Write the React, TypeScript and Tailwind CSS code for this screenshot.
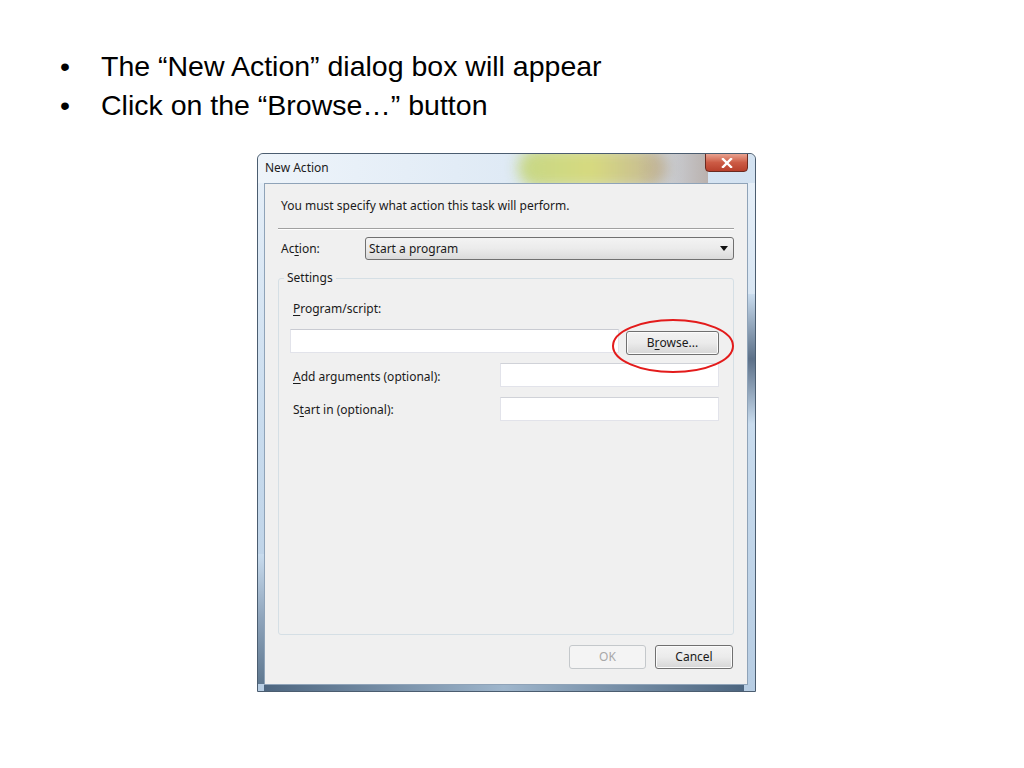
import React from "react";

const ui = { fontFamily: '"Noto Sans", "Open Sans", sans-serif' };

function U({ children }: { children: React.ReactNode }) {
  return <span className="underline underline-offset-2">{children}</span>;
}

function Btn({ children, w, disabled }: { children: React.ReactNode; w: string; disabled?: boolean }) {
  return (
    <div
      className={`${w} h-[24px] rounded-[3px] border flex items-center justify-center text-[12px] ${
        disabled
          ? "border-[#c4c8cb] bg-[#f4f4f4] text-[#a8a8a8]"
          : "border-[#707070] bg-gradient-to-b from-[#f3f3f3] via-[#ebebeb] to-[#d6d6d6] text-[#1a1a1a] shadow-[inset_0_0_0_1px_#fbfbfb]"
      }`}
    >
      {children}
    </div>
  );
}

export default function App() {
  return (
    <div className="w-[1024px] h-[768px] bg-white overflow-hidden" style={{ fontFamily: '"Liberation Sans", Arial, sans-serif' }}>
      <ul className="pt-[47px] pl-[60px] text-[28.5px] leading-[39px] text-black">
        <li className="flex">
          <span className="w-[41px]">•</span>
          <span>The “New Action” dialog box will appear</span>
        </li>
        <li className="flex">
          <span className="w-[41px]">•</span>
          <span>Click on the “Browse…” button</span>
        </li>
      </ul>

      {/* Window */}
      <div
        className="ml-[257px] mt-[28px] w-[499px] h-[539px] rounded-t-[6px] border border-[#4b5d70] bg-gradient-to-b from-[#e9f1f9] via-[#c9dcee] to-[#b7cde3] flex flex-col relative"
        style={ui}
      >
        {/* frame shading strips */}
        <div className="absolute left-0 top-[400px] w-[6px] h-[130px] bg-gradient-to-b from-[#c9dcee] via-[#8ea4bb] to-[#5f7890]" />
        <div className="absolute right-0 top-[140px] w-[7px] h-[130px] bg-gradient-to-b from-[#c9dcee] via-[#5d7189] to-[#c9dcee]" />
        <div className="absolute left-[6px] bottom-0 w-[480px] h-[6px] bg-gradient-to-r from-[#4d6680] via-[#9fb6cc] to-[#4d6680]" />

        {/* Title bar */}
        <div className="h-[29px] flex relative rounded-t-[6px] overflow-hidden bg-gradient-to-r from-[#eef4fa] via-[#dfeaf5] to-[#d3e2f1]">
          <div className="absolute left-[260px] top-[-6px] w-[150px] h-[40px] rounded-full bg-gradient-to-r from-[#c3d57a] via-[#d6d873] to-[#c0ad8c] blur-[7px] opacity-90" />
          <div className="absolute left-[380px] top-0 w-[70px] h-[29px] bg-gradient-to-r from-transparent to-[#b3a59d] opacity-80" />
          <span className="relative pl-[7px] pt-[5px] text-[12px] text-[#1c1c1c]">New Action</span>
          <div className="absolute right-[7px] top-[-1px] w-[43px] h-[19px] rounded-b-[4px] border border-[#6b2a20] bg-gradient-to-b from-[#e8a290] via-[#cc5b45] to-[#b8402c] flex items-center justify-center">
            <svg width="12" height="10" viewBox="0 0 12 10">
              <path d="M2 1 L10 9 M10 1 L2 9" stroke="#fff" strokeWidth="2.4" strokeLinecap="square" />
            </svg>
          </div>
        </div>

        {/* Client area */}
        <div className="relative flex-1 ml-[6px] mr-[7px] mb-[6px] border border-[#8fa3b8] bg-[#f0f0f0] flex flex-col text-[12px] text-[#1a1a1a]">
          <div className="pl-[16px] pt-[14px] leading-[16px]">You must specify what action this task will perform.</div>
          <div className="mx-[13px] mt-[14px] h-[2px] border-t border-[#a0a0a0] border-b border-b-white" />
          <div className="flex items-center mt-[7px] pl-[16px] pr-[13px]">
            <span className="w-[84px]">
              Ac<U>t</U>ion:
            </span>
            <div className="flex-1 h-[23px] rounded-[3px] border border-[#707070] bg-gradient-to-b from-[#f3f3f3] via-[#ebebeb] to-[#dadada] flex items-center pl-[3px] pr-[5px]">
              <span className="flex-1">Start a program</span>
              <svg width="8" height="5" viewBox="0 0 8 5">
                <path d="M0 0 H8 L4 5 Z" fill="#111" />
              </svg>
            </div>
          </div>

          {/* Group box */}
          <div className="relative mx-[13px] mt-[18px] h-[357px] rounded-[3px] border border-[#d5dfe5]">
            <span className="absolute left-[5px] top-[-10px] px-[3px] bg-[#f0f0f0] leading-[18px]">Settings</span>
            <div className="pt-[21px] pl-[14px] leading-[18px]">
              <U>P</U>rogram/script:
            </div>
            <div className="flex items-start mt-[11px] pl-[11px] pr-[14px]">
              <div className="w-[329px] h-[24px] bg-white border border-[#e2e3ea] border-t-[#c9cbd2]" />
              <div className="ml-[7px] mt-[2px] flex-1">
                <Btn w="w-full">
                  B<U>r</U>owse...
                </Btn>
              </div>
            </div>
            <div className="flex items-center mt-[8px] pl-[14px] pr-[14px]">
              <span className="flex-1 pt-[3px]">
                <U>A</U>dd arguments (optional):
              </span>
              <div className="w-[219px] h-[24px] bg-white border border-[#e2e3ea] border-t-[#d0d2d8]" />
            </div>
            <div className="flex items-center mt-[10px] pl-[14px] pr-[14px]">
              <span className="flex-1 pt-[1px]">
                S<U>t</U>art in (optional):
              </span>
              <div className="w-[219px] h-[24px] bg-white border border-[#e2e3ea] border-t-[#d0d2d8]" />
            </div>

            {/* Red ellipse annotation */}
            <svg className="absolute left-[331px] top-[39px]" width="126" height="58" viewBox="0 0 126 58">
              <ellipse cx="63" cy="28" rx="60" ry="26" fill="none" stroke="#e31b1b" strokeWidth="2" />
            </svg>
          </div>

          <div className="flex justify-end gap-[9px] mt-[10px] pr-[14px]">
            <Btn w="w-[77px]" disabled>
              OK
            </Btn>
            <Btn w="w-[78px]">Cancel</Btn>
          </div>
        </div>
      </div>
    </div>
  );
}
